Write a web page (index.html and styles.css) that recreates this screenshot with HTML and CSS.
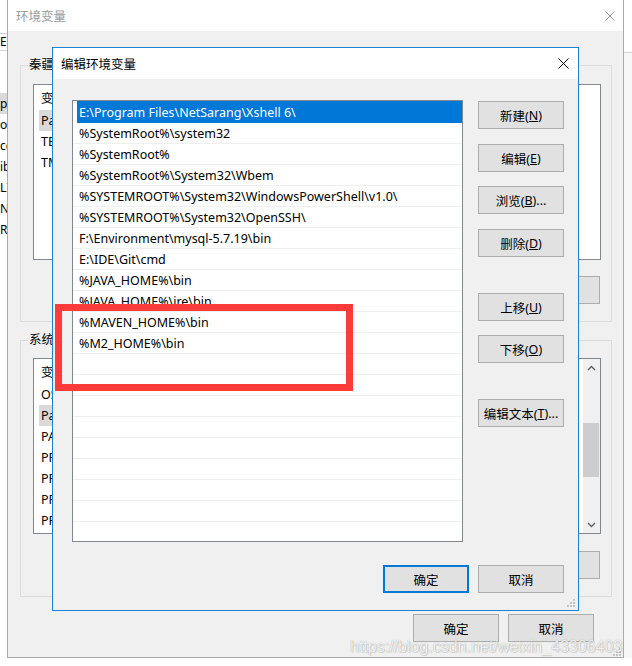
FILE: index.html
```html
<!DOCTYPE html>
<html lang="zh-CN">
<head>
<meta charset="utf-8">
<title>编辑环境变量</title>
<link rel="stylesheet" href="styles.css">
</head>
<body>
<div class="screen">
  <div class="strip-left">
    <div class="sl-a"></div>
    <div class="sl-er">Er</div>
    <div class="sl-gap"></div>
    <div class="sl-row hl">pi</div>
    <div class="sl-row">oc</div>
    <div class="sl-row">cc</div>
    <div class="sl-row">ib</div>
    <div class="sl-row">LI</div>
    <div class="sl-row">N(</div>
    <div class="sl-row">RE</div>
  </div>

  <div class="win">
    <div class="win-title">
      <span class="win-title-text">环境变量</span>
      <svg class="xicon" width="10" height="10" viewBox="0 0 10 10"><path d="M0.5 0.5L9.5 9.5M9.5 0.5L0.5 9.5" stroke="#9a9a9a" stroke-width="1" fill="none"/></svg>
    </div>
    <div class="win-body">
      <div class="group">
        <span class="group-label">秦疆 的用户变量(<u>U</u>)</span>
        <div class="vlist">
          <div class="vhead"><span class="c1">变量</span><span class="c2">值</span></div>
          <div class="vrow sel"><span class="c1">Path</span><span class="c2">C:\Users\秦疆\AppData\Local\Microsoft\WindowsApps;</span></div>
          <div class="vrow"><span class="c1">TEMP</span><span class="c2">%USERPROFILE%\AppData\Local\Temp</span></div>
          <div class="vrow"><span class="c1">TMP</span><span class="c2">%USERPROFILE%\AppData\Local\Temp</span></div>
        </div>
        <div class="btnrow">
          <button class="btn">新建(<u>N</u>)...</button>
          <button class="btn">编辑(<u>E</u>)...</button>
          <button class="btn">删除(<u>D</u>)</button>
        </div>
      </div>

      <div class="group group2">
        <span class="group-label">系统变量(<u>S</u>)</span>
        <div class="vlist vlist2">
          <div class="vcontent">
            <div class="vhead"><span class="c1">变量</span><span class="c2">值</span></div>
            <div class="vrow"><span class="c1">OS</span><span class="c2">Windows_NT</span></div>
            <div class="vrow sel"><span class="c1">Path</span><span class="c2">C:\ProgramData\Oracle\Java\javapath;</span></div>
            <div class="vrow"><span class="c1">PATHEXT</span><span class="c2">.COM;.EXE;.BAT;.CMD;.VBS;.VBE;.JS</span></div>
            <div class="vrow"><span class="c1">PROCESSOR_ARCHITECTURE</span><span class="c2">AMD64</span></div>
            <div class="vrow"><span class="c1">PROCESSOR_IDENTIFIER</span><span class="c2">Intel64 Family 6 Model 158</span></div>
            <div class="vrow"><span class="c1">PROCESSOR_LEVEL</span><span class="c2">6</span></div>
            <div class="vrow"><span class="c1">PROCESSOR_REVISION</span><span class="c2">9e0a</span></div>
          </div>
          <div class="vscroll">
            <div class="sb-btn"><svg width="9" height="6" viewBox="0 0 9 6"><path d="M1 5L4.5 1.5L8 5" stroke="#606060" stroke-width="1.4" fill="none"/></svg></div>
            <div class="sb-thumb"></div>
            <div class="sb-fill"></div>
            <div class="sb-btn"><svg width="9" height="6" viewBox="0 0 9 6"><path d="M1 1L4.5 4.5L8 1" stroke="#606060" stroke-width="1.4" fill="none"/></svg></div>
          </div>
        </div>
        <div class="btnrow">
          <button class="btn">新建(<u>W</u>)...</button>
          <button class="btn">编辑(<u>I</u>)...</button>
          <button class="btn">删除(<u>L</u>)</button>
        </div>
      </div>

      <div class="winbtns">
        <button class="btn">确定</button>
        <button class="btn">取消</button>
      </div>
    </div>
  </div>

  <div class="strip-right">
    <div class="sr-a"></div>
  </div>

  <svg class="grip grip-win" width="9" height="9" viewBox="0 0 9 9">
    <rect x="6" y="0" width="2" height="2" fill="#c4c4c4"/>
    <rect x="3" y="3" width="2" height="2" fill="#c4c4c4"/><rect x="6" y="3" width="2" height="2" fill="#c4c4c4"/>
    <rect x="0" y="6" width="2" height="2" fill="#c4c4c4"/><rect x="3" y="6" width="2" height="2" fill="#c4c4c4"/><rect x="6" y="6" width="2" height="2" fill="#c4c4c4"/>
  </svg>

  <div class="dialog">
    <div class="dlg-title">
      <span>编辑环境变量</span>
      <svg class="xicon" width="11" height="11" viewBox="0 0 11 11"><path d="M0.5 0.5L10.5 10.5M10.5 0.5L0.5 10.5" stroke="#000" stroke-width="1" fill="none"/></svg>
    </div>
    <div class="dlg-body">
      <div class="dlg-main">
        <div class="plist">
          <div class="prow sel"><span>E:\Program Files\NetSarang\Xshell 6\</span></div>
          <div class="prow"><span>%SystemRoot%\system32</span></div>
          <div class="prow"><span>%SystemRoot%</span></div>
          <div class="prow"><span>%SystemRoot%\System32\Wbem</span></div>
          <div class="prow"><span>%SYSTEMROOT%\System32\WindowsPowerShell\v1.0\</span></div>
          <div class="prow"><span>%SYSTEMROOT%\System32\OpenSSH\</span></div>
          <div class="prow"><span>F:\Environment\mysql-5.7.19\bin</span></div>
          <div class="prow"><span>E:\IDE\Git\cmd</span></div>
          <div class="prow"><span>%JAVA_HOME%\bin</span></div>
          <div class="prow"><span>%JAVA_HOME%\jre\bin</span></div>
          <div class="prow"><span>%MAVEN_HOME%\bin</span></div>
          <div class="prow"><span>%M2_HOME%\bin</span></div>
          <div class="prow"><span></span></div>
          <div class="prow"><span></span></div>
          <div class="prow"><span></span></div>
          <div class="prow"><span></span></div>
          <div class="prow"><span></span></div>
          <div class="prow"><span></span></div>
          <div class="prow"><span></span></div>
          <div class="prow"><span></span></div>
          <div class="prow"><span></span></div>
        </div>
        <div class="dlg-btns">
          <button class="btn">新建(<u>N</u>)</button>
          <button class="btn b2">编辑(<u>E</u>)</button>
          <button class="btn b3">浏览(<u>B</u>)...</button>
          <button class="btn b4">删除(<u>D</u>)</button>
          <button class="btn b5">上移(<u>U</u>)</button>
          <button class="btn b6">下移(<u>O</u>)</button>
          <button class="btn b7">编辑文本(<u>T</u>)...</button>
        </div>
      </div>
      <div class="dlg-foot">
        <button class="btn btn-default">确定</button>
        <button class="btn">取消</button>
      </div>
    </div>
    <svg class="grip grip-dlg" width="9" height="9" viewBox="0 0 9 9">
      <rect x="6" y="0" width="2" height="2" fill="#c4c4c4"/>
      <rect x="3" y="3" width="2" height="2" fill="#c4c4c4"/><rect x="6" y="3" width="2" height="2" fill="#c4c4c4"/>
      <rect x="0" y="6" width="2" height="2" fill="#c4c4c4"/><rect x="3" y="6" width="2" height="2" fill="#c4c4c4"/><rect x="6" y="6" width="2" height="2" fill="#c4c4c4"/>
    </svg>
  </div>

  <div class="redbox"></div>
  <div class="watermark">https://blog.csdn.net/weixin_43306403</div>
</div>
</body>
</html>
```

FILE: styles.css
```css
* { box-sizing: border-box; }
html, body { margin: 0; padding: 0; }
body {
  width: 632px;
  height: 666px;
  overflow: hidden;
  background: #ffffff;
  font-family: "Noto Sans", "Noto Sans CJK SC", sans-serif;
  font-size: 12.5px;
  color: #000;
}
u { text-decoration: underline; text-underline-offset: 1px; }

.screen {
  position: relative;
  width: 632px;
  height: 666px;
  display: flex;
  align-items: flex-start;
}

/* window peeking at the left edge */
.strip-left {
  width: 7px;
  height: 658px;
  flex: none;
  overflow: hidden;
  background: #fff;
  white-space: nowrap;
  font-size: 12px;
}
.sl-a { height: 34px; border-bottom: 1px solid #d4d4d4; }
.sl-er { height: 17px; line-height: 16px; border-bottom: 1px solid #d4d4d4; }
.sl-gap { height: 42px; }
.sl-row { height: 21px; line-height: 21px; }
.sl-row.hl { background: #dadada; }

.strip-right {
  width: 8px;
  height: 658px;
  flex: none;
  background: #f7f7f7;
}
.sr-a { height: 53px; border-bottom: 1px solid #d4d4d4; background: #fff; }

/* background window */
.win {
  width: 617px;
  height: 658px;
  flex: none;
  display: flex;
  flex-direction: column;
  border: 1px solid #aaaaaa;
  border-top: none;
  background: #f0f0f0;
}
.win-title {
  height: 31px;
  flex: none;
  background: #fff;
  display: flex;
  align-items: center;
  justify-content: space-between;
  padding: 0 8px 0 8px;
  color: #9a9a9a;
}
.xicon { display: block; }
.win-body {
  flex: 1;
  display: flex;
  flex-direction: column;
  padding: 34px 11px 0 12px;
}
.group {
  position: relative;
  height: 257px;
  flex: none;
  border: 1px solid #dcdcdc;
  padding: 18px 10px 0 12px;
  display: flex;
  flex-direction: column;
}
.group2 { margin-top: 18px; padding-top: 17px; }
.group-label {
  position: absolute;
  top: -9px;
  left: 7px;
  padding: 0 1px;
  line-height: 16px;
  background: #f0f0f0;
  white-space: nowrap;
}
.vlist {
  height: 176px;
  flex: none;
  background: #fff;
  border: 1px solid #828790;
  overflow: hidden;
  display: flex;
  flex-direction: column;
}
.vlist2 { flex-direction: row; }
.vcontent { flex: 1; display: flex; flex-direction: column; overflow: hidden; }
.vhead {
  height: 25px;
  flex: none;
  display: flex;
  align-items: center;
  padding-left: 7px;
  white-space: nowrap;
}
.vhead .c1 { width: 170px; }
.vrow {
  height: 21px;
  flex: none;
  display: flex;
  padding-left: 5px;
  white-space: nowrap;
}
.vrow .c1 {
  width: 172px;
  padding-left: 2px;
  display: flex;
  align-items: center;
}
.vrow.sel .c1 { background: #dadada; }
.vrow .c2 {
  width: 290px;
  overflow: hidden;
  display: flex;
  align-items: center;
}
.vscroll {
  width: 17px;
  flex: none;
  background: #f0f0f0;
  display: flex;
  flex-direction: column;
}
.sb-btn {
  height: 17px;
  flex: none;
  display: flex;
  align-items: center;
  justify-content: center;
}
.sb-thumb {
  height: 54px;
  flex: none;
  margin: 47px 1px 0 0;
  background: #cdcdcd;
}
.sb-fill { flex: 1; }

.btn {
  width: 86px;
  height: 28px;
  flex: none;
  padding: 0;
  margin: 0;
  border: 1px solid #adadad;
  background: #e1e1e1;
  color: #000;
  font: inherit;
  display: flex;
  align-items: center;
  justify-content: center;
  white-space: nowrap;
}
.btnrow {
  display: flex;
  justify-content: flex-end;
  gap: 9px;
  margin-top: 16px;
  padding-right: 1px;
}
.group2 .btnrow { margin-top: 17px; }
.winbtns {
  display: flex;
  justify-content: flex-end;
  gap: 9px;
  margin-top: 17px;
  padding-right: 18px;
}

.grip { position: absolute; display: block; }
.grip-win { left: 613px; top: 648px; }

/* foreground dialog (overlapping window) */
.dialog {
  position: absolute;
  left: 52px;
  top: 47px;
  width: 527px;
  height: 564px;
  border: 1px solid #1883d7;
  background: #f0f0f0;
  display: flex;
  flex-direction: column;
}
.dlg-title {
  height: 31px;
  flex: none;
  background: #fff;
  display: flex;
  align-items: center;
  justify-content: space-between;
  padding: 0 9px 0 8px;
}
.dlg-body {
  flex: 1;
  display: flex;
  flex-direction: column;
  padding: 21px 14px 17px 19px;
}
.dlg-main {
  height: 442px;
  flex: none;
  display: flex;
  gap: 15px;
}
.plist {
  width: 391px;
  height: 442px;
  flex: none;
  background: #fff;
  border: 1px solid #828790;
  overflow: hidden;
}
.prow {
  height: 21px;
  border-bottom: 1px solid #efefef;
  padding-left: 4px;
  display: flex;
  white-space: nowrap;
}
.prow span {
  flex: 1;
  padding-left: 2px;
  display: flex;
  align-items: center;
}
.prow.sel { height: 22px; border-bottom: none; }
.prow.sel span { background: #0078d7; color: #fff; }
.dlg-btns {
  width: 86px;
  flex: none;
  display: flex;
  flex-direction: column;
  padding-top: 1px;
}
.dlg-btns .b2 { margin-top: 15px; }
.dlg-btns .b3 { margin-top: 14px; }
.dlg-btns .b4 { margin-top: 15px; }
.dlg-btns .b5 { margin-top: 36px; }
.dlg-btns .b6 { margin-top: 14px; }
.dlg-btns .b7 { margin-top: 36px; }
.dlg-foot {
  display: flex;
  justify-content: flex-end;
  gap: 9px;
  margin-top: 23px;
}
.btn-default { border: 2px solid #0078d7; }
.grip-dlg { right: 2px; bottom: 2px; }

/* annotation overlays */
.redbox {
  position: absolute;
  left: 55px;
  top: 304px;
  width: 298px;
  height: 87px;
  border: 7px solid #fe3b3b;
}
.watermark {
  position: absolute;
  left: 350px;
  top: 638px;
  font-family: "Liberation Sans", Arial, sans-serif;
  font-size: 16px;
  line-height: 18px;
  white-space: nowrap;
  color: rgba(255, 255, 255, 0.85);
  text-shadow: 0 0 1px rgba(0, 0, 0, 0.35), 1px 1px 1px rgba(0, 0, 0, 0.1);
}
```
